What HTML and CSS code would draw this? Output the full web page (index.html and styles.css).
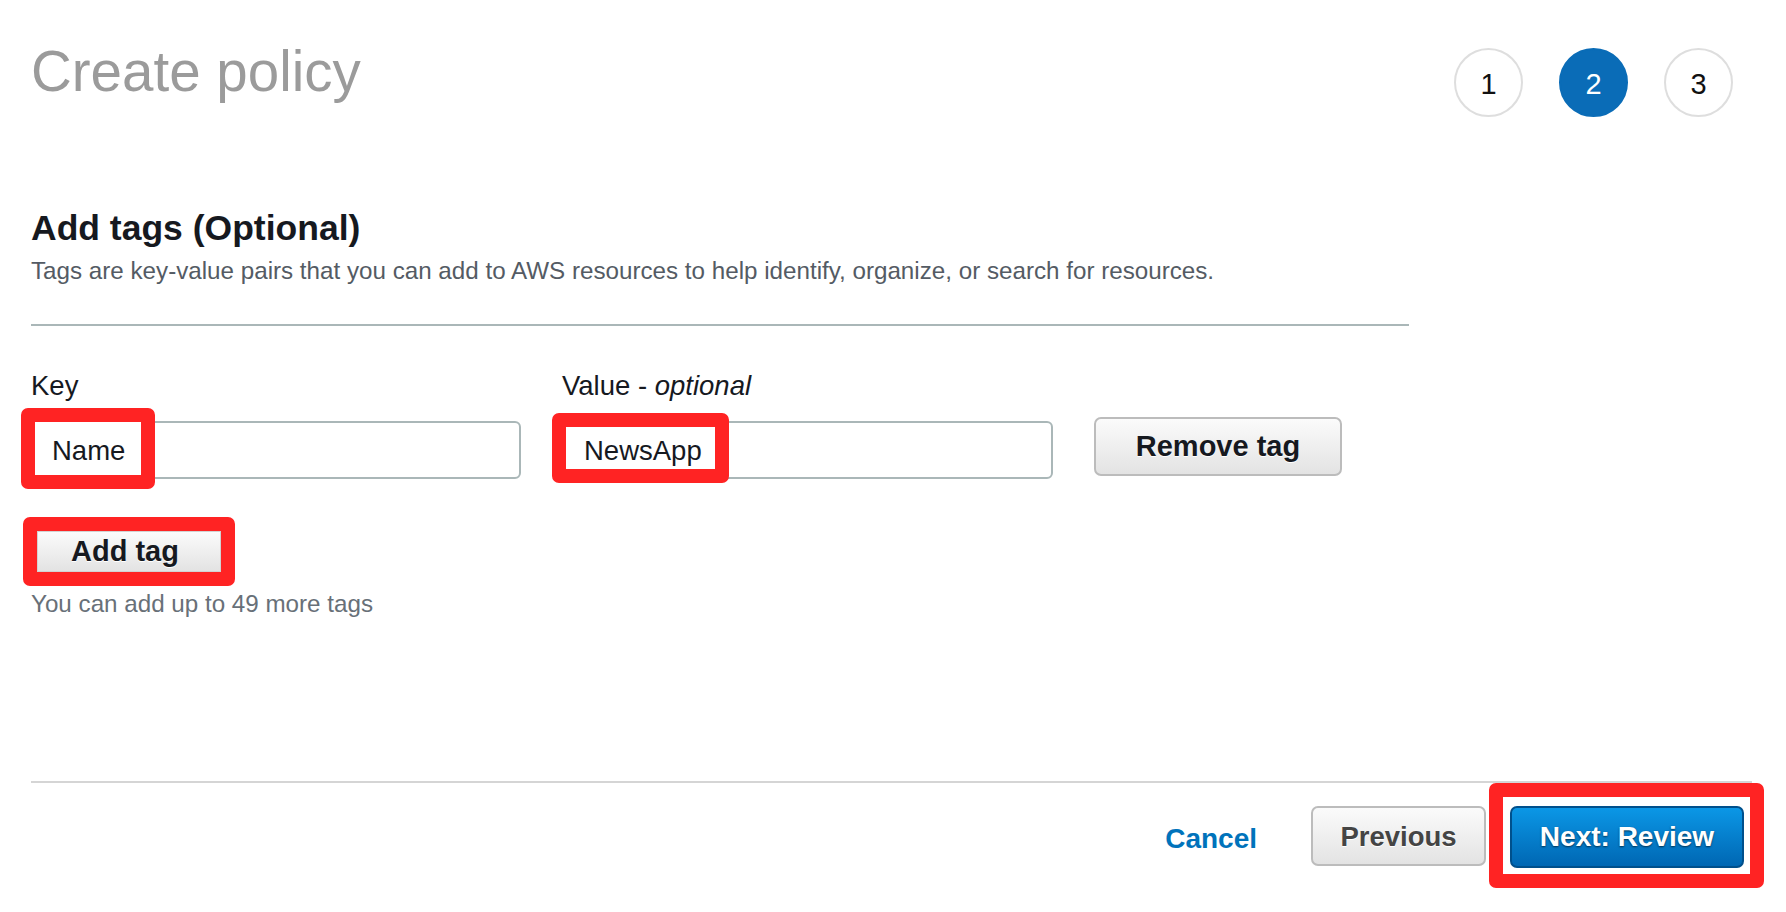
FILE: index.html
```html
<!DOCTYPE html>
<html lang="en">
<head>
    <meta charset="UTF-8">
    <meta name="viewport" content="width=device-width, initial-scale=1.0">
    <title>Create policy</title>
    <link rel="stylesheet" href="styles.css">
</head>
<body>
    <div class="page">
        <header class="page-header">
            <h1 class="page-title">Create policy</h1>
            <ol class="steps">
                <li class="steps__item">1</li>
                <li class="steps__item steps__item--active">2</li>
                <li class="steps__item">3</li>
            </ol>
        </header>

        <section class="tags">
            <h2 class="tags__title">Add tags (Optional)</h2>
            <p class="tags__desc">Tags are key-value pairs that you can add to AWS resources to help identify, organize, or search for resources.</p>
            <div class="tags__divider"></div>

            <div class="tag-grid">
                <label class="tag-grid__label">Key</label>
                <label class="tag-grid__label">Value - <em>optional</em></label>
                <span></span>

                <div class="field"><span class="mark mark--name">Name</span></div>
                <div class="field"><span class="mark mark--value">NewsApp</span></div>
                <button class="btn btn--remove">Remove tag</button>
            </div>

            <div class="add-row">
                <span class="mark mark--add"><button class="btn btn--add">Add tag</button></span>
            </div>
            <p class="tags__hint">You can add up to 49 more tags</p>
        </section>

        <footer class="actions">
            <a href="#" class="actions__cancel">Cancel</a>
            <button class="btn btn--prev">Previous</button>
            <span class="mark mark--next"><button class="btn btn--primary">Next: Review</button></span>
        </footer>
    </div>
</body>
</html>
```

FILE: styles.css
```css
* {
    margin: 0;
    padding: 0;
    box-sizing: border-box;
    font-family: "Liberation Sans", Arial, Helvetica, sans-serif;
}

body {
    background: #ffffff;
    color: #16191f;
}

.page {
    width: 1786px;
    padding: 0 34px 0 31px;
}

/* header */
.page-header {
    display: flex;
    justify-content: space-between;
    align-items: flex-start;
    padding-top: 43px;
}

.page-title {
    font-size: 56.5px;
    line-height: 57px;
    font-weight: normal;
    color: #9b9b9b;
}

.steps {
    display: flex;
    gap: 36px;
    list-style: none;
    margin: 5px 19px 0 0;
}

.steps__item {
    width: 69px;
    height: 69px;
    border: 2px solid #dedede;
    border-radius: 50%;
    display: flex;
    align-items: center;
    justify-content: center;
    padding-top: 4px;
    font-size: 29px;
    color: #111111;
}

.steps__item--active {
    background: #0a6cb7;
    border-color: #0a6cb7;
    color: #ffffff;
}

/* tags section */
.tags__title {
    margin-top: 90px;
    font-size: 35.5px;
    line-height: 42px;
    font-weight: bold;
    color: #16191f;
}

.tags__desc {
    margin-top: 5px;
    font-size: 24.2px;
    line-height: 33px;
    color: #545b64;
}

.tags__divider {
    margin-top: 37px;
    width: 1378px;
    border-top: 2px solid #aab7b8;
}

.tag-grid {
    margin-top: 42px;
    display: grid;
    grid-template-columns: 490px 491px 248px;
    column-gap: 41px;
    row-gap: 17px;
}

.tag-grid__label {
    font-size: 27.5px;
    line-height: 36px;
    color: #16191f;
}

.tag-grid__label em {
    font-style: italic;
}

.field {
    height: 58px;
    border: 2px solid #aab7b8;
    border-radius: 6px;
    display: flex;
    align-items: center;
    padding: 0 20px;
    font-size: 27.5px;
    color: #16191f;
}

/* red highlight boxes */
.mark {
    display: inline-flex;
    align-items: center;
    border: 14px solid #ff2323;
    border-radius: 7px;
    background: #ffffff;
}

.mark--name {
    height: 81px;
    margin: 0 0 4px -32px;
    padding: 6px 16px 0 17px;
}

.mark--value {
    height: 70px;
    margin: 0 0 4px -32px;
    padding: 6px 13px 0 18px;
}

.mark--add {
    margin-left: -8px;
}

.mark--next {
    padding: 9px 6px 6px 7px;
    margin: 0 -12px 0 3px;
}

/* buttons */
.btn {
    display: inline-flex;
    align-items: center;
    justify-content: center;
    font-size: 29px;
    font-weight: bold;
    color: #16191f;
    background: linear-gradient(to bottom, #fbfbfb, #e3e3e3);
    border: 2px solid #bcbcbc;
    border-radius: 7px;
    text-shadow: 0 1px 0 #ffffff;
    cursor: pointer;
}

.btn--remove {
    width: 248px;
    height: 59px;
    align-self: start;
    margin-top: -4px;
}

.btn--add {
    width: 184px;
    height: 41px;
    border: 1px solid #d2d2d2;
    border-radius: 0;
    padding-right: 8px;
}

.btn--prev {
    width: 175px;
    height: 60px;
    padding-top: 3px;
    font-size: 27.5px;
    color: #444444;
}

.btn--primary {
    width: 234px;
    height: 62px;
    font-size: 28px;
    color: #ffffff;
    background: linear-gradient(to bottom, #0b97e6, #0067b3);
    border: 2px solid #00508c;
    text-shadow: 0 1px 2px rgba(0, 0, 0, 0.6);
}

.add-row {
    display: flex;
    margin-top: 38px;
}

.tags__hint {
    margin-top: 1px;
    font-size: 24.2px;
    line-height: 33px;
    color: #687078;
}

/* footer */
.actions {
    margin-top: 161px;
    border-top: 2px solid #d5d5d5;
    display: flex;
    justify-content: flex-end;
    align-items: center;
}

.actions__cancel {
    margin: 6px 54px 0 0;
    font-size: 28px;
    font-weight: bold;
    color: #0073bb;
    text-decoration: none;
}
```
